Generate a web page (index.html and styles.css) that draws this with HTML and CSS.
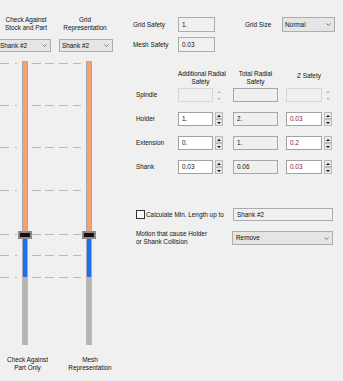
FILE: index.html
```html
<!DOCTYPE html>
<html>
<head>
<meta charset="utf-8">
<link rel="stylesheet" href="styles.css">
</head>
<body>
<div class="dlg">
  <div class="left">
    <div class="heads">
      <div class="hd h1">Check Against<br>Stock and Part</div>
      <div class="hd h2">Grid<br>Representation</div>
    </div>
    <div class="combos">
      <div class="combo lc"><span>Shank #2</span><svg class="chev" width="5" height="3" viewBox="0 0 5 3"><polyline points="0.5,0.5 2.5,2.5 4.5,0.5" fill="none" stroke="#606060" stroke-width="0.8"/></svg></div>
      <div class="combo lc"><span>Shank #2</span><svg class="chev" width="5" height="3" viewBox="0 0 5 3"><polyline points="0.5,0.5 2.5,2.5 4.5,0.5" fill="none" stroke="#606060" stroke-width="0.8"/></svg></div>
    </div>
    <div class="sliders">
      <div class="ticks">
        <div class="tick"></div>
        <div class="tick"></div>
        <div class="tick"></div>
        <div class="tick"></div>
        <div class="tick"></div>
        <div class="tick"></div>
        <div class="tick"></div>
      </div>
      <div class="tracks">
        <div class="track">
          <div class="seg orange"></div>
          <div class="thumb"></div>
          <div class="seg blue"></div>
          <div class="seg gray"></div>
        </div>
        <div class="track">
          <div class="seg orange"></div>
          <div class="thumb"></div>
          <div class="seg blue"></div>
          <div class="seg gray"></div>
        </div>
      </div>
    </div>
    <div class="foots">
      <div class="ft f1">Check Against<br>Part Only</div>
      <div class="ft f2">Mesh<br>Representation</div>
    </div>
  </div>

  <div class="right">
    <div class="r1">
      <div class="lbl">Grid Safety</div>
      <div class="inp">1.</div>
      <div class="lbl gs">Grid Size</div>
      <div class="combo gcombo"><span>Normal</span><svg class="chev" width="5" height="3" viewBox="0 0 5 3"><polyline points="0.5,0.5 2.5,2.5 4.5,0.5" fill="none" stroke="#606060" stroke-width="0.8"/></svg></div>
    </div>
    <div class="r2">
      <div class="lbl">Mesh Safety</div>
      <div class="inp">0.03</div>
    </div>

    <div class="thead">
      <div></div>
      <div class="th w45">Additional Radial<br>Safety</div>
      <div class="th w45">Total Radial<br>Safety</div>
      <div class="th w46 z">Z Safety</div>
    </div>
    <div class="tbody">
      <div class="rl">Spindle</div>
      <div class="num dis"><div class="box b35"></div><div class="spin"><i class="up"></i><i class="dn"></i></div></div>
      <div class="tot"></div>
      <div class="num dis"><div class="box b36"></div><div class="spin"><i class="up"></i><i class="dn"></i></div></div>

      <div class="rl">Holder</div>
      <div class="num"><div class="box b35">1.</div><div class="spin"><i class="up"></i><i class="dn"></i></div></div>
      <div class="tot">2.</div>
      <div class="num"><div class="box b36 red">0.03</div><div class="spin"><i class="up"></i><i class="dn"></i></div></div>

      <div class="rl">Extension</div>
      <div class="num"><div class="box b35">0.</div><div class="spin"><i class="up"></i><i class="dn"></i></div></div>
      <div class="tot">1.</div>
      <div class="num"><div class="box b36 red">0.2</div><div class="spin"><i class="up"></i><i class="dn"></i></div></div>

      <div class="rl">Shank</div>
      <div class="num"><div class="box b35">0.03</div><div class="spin"><i class="up"></i><i class="dn"></i></div></div>
      <div class="tot">0.06</div>
      <div class="num"><div class="box b36 red">0.03</div><div class="spin"><i class="up"></i><i class="dn"></i></div></div>
    </div>

    <div class="chkrow">
      <div class="chkcell"><span class="cb"></span><span>Calculate Min. Length up to</span></div>
      <div class="tbox">Shank #2</div>
    </div>
    <div class="motion">
      <div class="mlbl">Motion that cause Holder<br>or Shank Collision</div>
      <div class="combo mcombo"><span>Remove</span><svg class="chev" width="5" height="3" viewBox="0 0 5 3"><polyline points="0.5,0.5 2.5,2.5 4.5,0.5" fill="none" stroke="#606060" stroke-width="0.8"/></svg></div>
    </div>
  </div>
</div>
</body>
</html>
```

FILE: styles.css
```css
* { box-sizing: border-box; margin: 0; padding: 0; }
html, body { background: #f0f0f0; }
body {
  font-family: "Liberation Sans", Arial, sans-serif;
  font-size: 6.4px;
  line-height: 8px;
  color: #111;
  width: 343px;
  height: 381px;
  overflow: hidden;
}
.dlg { display: flex; }

/* ---------- left ---------- */
.left { width: 133px; flex: none; }
.heads { display: flex; padding-top: 16px; }
.hd { text-align: center; white-space: nowrap; }
.h1 { width: 52px; }
.h2 { width: 52px; margin-left: 7px; }

.combo {
  display: flex;
  align-items: center;
  justify-content: space-between;
  border: 1px solid #adadad;
  background: #e5e5e5;
  padding: 0 3px 0 2px;
  white-space: nowrap;
}
.chev { flex: none; }
.combos { display: flex; margin-top: 7px; }
.lc { width: 54px; height: 13px; }
.lc:first-child { margin-left: -3px; }
.lc + .lc { margin-left: 8px; }

.sliders { display: grid; margin-top: 9px; height: 284px; }
.ticks, .tracks { grid-area: 1 / 1; }
.ticks { display: flex; flex-direction: column; }
.tick {
  width: 81px;
  height: 1px;
  flex: none;
  background: linear-gradient(to right,
    #b9b9b9 0 9px, transparent 9px 15px,
    #b9b9b9 15px 17px, transparent 17px 32px,
    #b9b9b9 32px 41px, transparent 41px 45px,
    #b9b9b9 45px 54px, transparent 54px 59px,
    #b9b9b9 59px 68px, transparent 68px 73px,
    #b9b9b9 73px 81px);
}
.tick:nth-child(1) { margin-top: 2px; }
.tick:nth-child(2) { margin-top: 41px; }
.tick:nth-child(3) { margin-top: 41px; }
.tick:nth-child(4) { margin-top: 42px; }
.tick:nth-child(5) { margin-top: 43px; }
.tick:nth-child(6) { margin-top: 20px; }
.tick:nth-child(7) { margin-top: 21px; }

.tracks { display: flex; padding-left: 22px; gap: 58px; }
.track { width: 6px; display: flex; flex-direction: column; align-items: center; }
.seg { width: 6px; flex: none; border-left: 1px solid #a8a8a8; border-right: 1px solid #a8a8a8; }
.orange { height: 170px; background: #f4a36e; border-top: 1px solid #a8a8a8; }
.thumb { width: 14px; height: 8px; flex: none; background: #111; border: 2px solid #8a8a8a; }
.blue { height: 38px; background: #1d6ff3; }
.gray { height: 68px; background: #b4b4b4; border-color: #bdbdbd; }

.foots { display: flex; margin-top: 11px; }
.ft { text-align: center; white-space: nowrap; }
.f1 { width: 55px; }
.f2 { width: 54px; margin-left: 8px; }

/* ---------- right ---------- */
.right { flex: 1; padding-top: 17px; }
.r1, .r2 { display: flex; align-items: center; height: 15px; }
.r2 { margin-top: 5px; }
.lbl { width: 45px; white-space: nowrap; }
.inp {
  width: 37px; height: 15px;
  border: 1px solid #acacac;
  background: #f0f0f0;
  padding-left: 3px;
  display: flex; align-items: center;
}
.gs { margin-left: 30px; width: 37px; }
.gcombo { width: 53px; height: 15px; }

.thead {
  display: grid;
  grid-template-columns: 45px 55px 53px 46px;
  margin-top: 18px;
  height: 16px;
}
.th { text-align: center; white-space: nowrap; }
.w45 { width: 45px; }
.w46 { width: 46px; }
.z { padding-top: 2px; }

.tbody {
  display: grid;
  grid-template-columns: 45px 55px 53px 46px;
  grid-auto-rows: 14px;
  row-gap: 10px;
  margin-top: 2px;
  align-items: center;
}
.rl { padding-left: 3px; white-space: nowrap; }
.num { display: flex; height: 14px; gap: 2px; }
.box {
  height: 14px;
  border: 1px solid #a2a2a2;
  background: #fff;
  padding-left: 3px;
  display: flex; align-items: center;
}
.b35 { width: 35px; }
.b36 { width: 36px; }
.red { color: #8a1c1c; }
.spin { width: 8px; height: 14px; display: flex; flex-direction: column; }
.spin i {
  flex: 1;
  display: flex; align-items: center; justify-content: center;
  border: 1px solid #bcbcbc;
  background: #e6e6e6;
}
.spin i::before {
  content: "";
  width: 0; height: 0;
  border-left: 2px solid transparent;
  border-right: 2px solid transparent;
}
.spin .up::before { border-bottom: 2px solid #111; }
.spin .dn::before { border-top: 2px solid #111; }
.dis .box { border-color: #d6d6d6; background: #f0f0f0; }
.dis .spin i { border-color: transparent; background: transparent; }
.dis .spin .up::before { border-bottom-color: #b8b8b8; }
.dis .spin .dn::before { border-top-color: #b8b8b8; }
.tot {
  width: 45px; height: 14px;
  border: 1px solid #a8a8a8;
  background: #f0f0f0;
  padding-left: 3px;
  display: flex; align-items: center;
}

.chkrow {
  display: grid;
  grid-template-columns: 100px 100px;
  align-items: center;
  margin-top: 34px;
  height: 13px;
}
.chkcell { display: flex; align-items: center; padding-left: 3px; white-space: nowrap; }
.cb { width: 9px; height: 9px; border: 1px solid #333; background: #f8f8f8; margin-right: 1px; flex: none; }
.tbox {
  width: 100px; height: 13px;
  border: 1px solid #acacac;
  background: #f0f0f0;
  padding-left: 3px;
  display: flex; align-items: center;
}
.motion {
  display: grid;
  grid-template-columns: 99px 101px;
  align-items: center;
  margin-top: 9px;
}
.mlbl { padding-left: 3px; white-space: nowrap; }
.mcombo { height: 14px; width: 101px; padding-left: 3px; }
```
